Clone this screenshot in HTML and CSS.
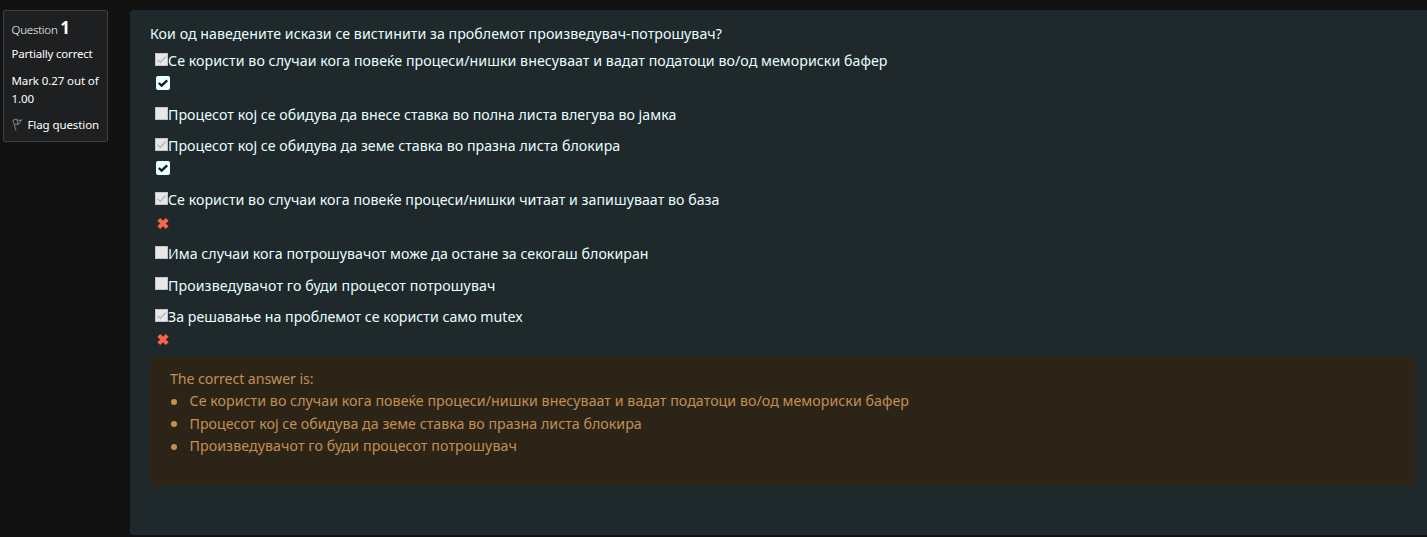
FILE: index.html
```html
<!DOCTYPE html>
<html lang="en">
<head>
<meta charset="utf-8">
<title>Question 1</title>
<link rel="stylesheet" href="styles.css">
</head>
<body>
<svg class="defs" width="0" height="0">
  <symbol id="tick" viewBox="0 0 13 13"><path d="M2.5 6.8 5.3 9.4 10.7 3.4" fill="none" stroke="#bababa" stroke-width="1.5"/></symbol>
  <symbol id="right" viewBox="0 0 14 14"><rect width="14" height="14" rx="2" fill="#e8ffff"/><path d="M2.8 7 5.6 9.7 11.2 4.3" fill="none" stroke="#17191b" stroke-width="2.3"/></symbol>
  <symbol id="wrong" viewBox="0 0 14 14"><path d="M2.8 3.3 11.2 11.7M11.2 3.3 2.8 11.7" fill="none" stroke="#ff6347" stroke-width="4"/></symbol>
</svg>
<main class="question">
  <aside class="info">
    <h3 class="number">Question <b>1</b></h3>
    <p class="state">Partially correct</p>
    <p class="grade">Mark 0.27 out of<br>1.00</p>
    <p class="flag"><svg width="11" height="14" viewBox="0 0 11 14"><path d="M.8 1.8 4 12.5M1.2 2.3Q3.4.8 5 1.8T9.5 2L6.2 6.6Q4.4 5.6 2.6 6.7M5 2 5.8 5.6" fill="none" stroke="#777674" stroke-width="1.1"/></svg><span>Flag question</span></p>
  </aside>
  <section class="content">
    <p class="prompt">Кои од наведените искази се вистинити за проблемот произведувач-потрошувач?</p>
    <div class="answers">
      <div class="answer"><div class="choice"><i class="box"><svg><use href="#tick"/></svg></i><span class="long">Се користи во случаи кога повеќе процеси/нишки внесуваат и вадат податоци во/од мемориски бафер</span></div><svg class="mark"><use href="#right"/></svg></div>
      <div class="answer"><div class="choice"><i class="box"></i><span>Процесот кој се обидува да внесе ставка во полна листа влегува во јамка</span></div></div>
      <div class="answer"><div class="choice"><i class="box"><svg><use href="#tick"/></svg></i><span>Процесот кој се обидува да земе ставка во празна листа блокира</span></div><svg class="mark"><use href="#right"/></svg></div>
      <div class="answer"><div class="choice"><i class="box"><svg><use href="#tick"/></svg></i><span>Се користи во случаи кога повеќе процеси/нишки читаат и запишуваат во база</span></div><svg class="mark wrong"><use href="#wrong"/></svg></div>
      <div class="answer"><div class="choice"><i class="box"></i><span>Има случаи кога потрошувачот може да остане за секогаш блокиран</span></div></div>
      <div class="answer"><div class="choice"><i class="box"></i><span class="short">Произведувачот го буди процесот потрошувач</span></div></div>
      <div class="answer"><div class="choice"><i class="box"><svg><use href="#tick"/></svg></i><span class="mixed">За решавање на проблемот се користи само mutex</span></div><svg class="mark wrong"><use href="#wrong"/></svg></div>
    </div>
    <div class="outcome">
      <p class="lead">The correct answer is:</p>
      <ul class="correct">
        <li><span class="long">Се користи во случаи кога повеќе процеси/нишки внесуваат и вадат податоци во/од мемориски бафер</span></li>
        <li><span>Процесот кој се обидува да земе ставка во празна листа блокира</span></li>
        <li><span class="short">Произведувачот го буди процесот потрошувач</span></li>
      </ul>
    </div>
  </section>
</main>
</body>
</html>
```
FILE: styles.css
```css
* { box-sizing: border-box; }
body { margin: 0; height: 537px; overflow: hidden; background: #121212; color: #e8ffff; font: 14.2px/22.5px "Noto Sans", sans-serif; letter-spacing: .03px; }
p, h3, ul { margin: 0; padding: 0; }
.defs { display: block; }
.question { display: flex; align-items: flex-start; padding: 10px 0 0 3px; }
.info { flex: none; width: 105px; height: 132px; padding: 5px 0 0 7.5px; background: #1d1f20; border: 1px solid #3c4145; border-radius: 2px; color: #fff; font-size: 11.5px; line-height: 18px; letter-spacing: -.1px; white-space: nowrap; }
.number { font-size: 11.5px; font-weight: 300; line-height: 23px; color: #fff; letter-spacing: -.2px; }
.number b { font-size: 17px; font-weight: 700; color: #fff; }
.state { margin-top: 4px; letter-spacing: -.2px; }
.grade { margin-top: 9px; }
.flag { display: flex; align-items: center; gap: 5px; margin-top: 8px; }
.content { flex: 1; height: 525px; margin-left: 22px; padding: 12.5px 12px 0 20px; background: #1f282b; border-radius: 4px 0 0 4px; }
.prompt { white-space: nowrap; }
.answers { padding: 4px 0 0 5px; }
.answer { padding-bottom: 8.8px; }
.answer:last-child { padding-bottom: 6px; }
.choice { display: flex; align-items: center; height: 22.5px; white-space: nowrap; }
.choice span { padding-top: 2px; }
.box { flex: none; width: 13px; height: 13px; margin-top: -2px; background: #e7e7e7; border: 1px solid #c4c4c4; }
.box svg { display: block; width: 13px; height: 13px; margin: -1px; }
.mark { display: block; width: 14px; height: 14px; margin: 4px 0 4.7px 1px; }
.wrong { margin-top: 5px; margin-bottom: 3.7px; }
.long { letter-spacing: .05px; }
.short { letter-spacing: .09px; }
.mixed { letter-spacing: 0; }
.outcome { height: 130px; padding: 12px 20px; background: #2d2418; border-radius: 4px; color: #c28f52; }
.lead { line-height: 22px; letter-spacing: -.08px; }
.correct { padding-left: 19.5px; list-style: none; }
.correct li { display: flex; align-items: center; white-space: nowrap; }
.correct li::before { content: ""; width: 6px; height: 6px; margin: 1px 12.5px 0 -18.5px; border-radius: 50%; background: #c28f52; }
```
